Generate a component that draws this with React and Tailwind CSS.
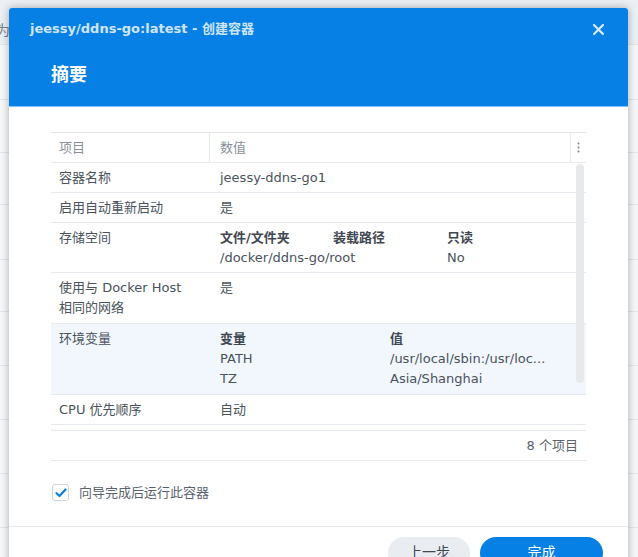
import React from "react";

const font = { fontFamily: '"DejaVu Sans", "Noto Sans CJK SC", sans-serif' };

function Row({ label, children, h, highlight }) {
  return (
    <div
      className={`flex border-b border-[#e6e9ed] ${highlight ? "bg-[#f1f7fd]" : ""}`}
      style={{ height: h }}
    >
      <div className="w-[159px] shrink-0 pl-2 pt-[5px] leading-[20px]">{label}</div>
      <div className="flex-1 pl-[10px] pt-[5px] leading-[20px] min-w-0">{children}</div>
    </div>
  );
}

export default function App() {
  const bgRows = [45, 55, 53, 52, 55, 52, 54, 54, 54, 54];
  return (
    <div
      className="relative w-[638px] h-[557px] overflow-hidden bg-[#f6f7f9] text-[13px] text-[#4a535c]"
      style={font}
    >
      {/* background page */}
      <div className="flex flex-col">
        {bgRows.map((h, i) => (
          <div
            key={i}
            className={`border-b border-[#e3e6ea] ${i === 0 ? "bg-[#eceff3]" : ""}`}
            style={{ height: h }}
          >
            {i === 0 && (
              <div className="pt-[20px] pl-0 text-[14px] text-[#7a8088] -ml-[4px]">为</div>
            )}
          </div>
        ))}
      </div>

      {/* dialog */}
      <div className="absolute left-[9px] top-[8px] w-[619px] h-[580px] bg-white shadow-[0_0_8px_rgba(0,0,0,0.3)] rounded-t-[3px] flex flex-col">
        <div className="h-[99px] bg-[#0780e6] border-b border-[#7cc4ff] rounded-t-[3px] relative">
          <div className="pt-[11px] pl-[21px] text-[13px] font-bold text-[#cfe5fb]">
            jeessy/ddns-go:latest - 创建容器
          </div>
          <div className="pt-[22px] pl-[42px] text-[18px] font-bold text-white">摘要</div>
          <svg
            className="absolute right-[24px] top-[16px]"
            width="11"
            height="11"
            viewBox="0 0 11 11"
          >
            <path d="M1 1L10 10M10 1L1 10" stroke="#d4ebff" strokeWidth="2.2" strokeLinecap="round" />
          </svg>
        </div>

        <div className="px-[42px] pt-[25px]">
          {/* table */}
          <div className="border-t border-[#e3e6ea]">
            <div className="flex h-[30px] border-b border-[#e6e9ed] text-[#8a9099] leading-[29px]">
              <div className="w-[159px] shrink-0 pl-2 border-r border-[#e6e9ed]">项目</div>
              <div className="flex-1 pl-[10px]">数值</div>
              <div className="w-[16px] border-l border-[#e6e9ed] flex items-center justify-center">
                <svg width="3" height="11" viewBox="0 0 3 11">
                  <circle cx="1.5" cy="1.5" r="1" fill="#7a8088" />
                  <circle cx="1.5" cy="5.5" r="1" fill="#7a8088" />
                  <circle cx="1.5" cy="9.5" r="1" fill="#7a8088" />
                </svg>
              </div>
            </div>
            <div className="relative h-[262px] overflow-hidden">
              <Row label="容器名称" h={30}>jeessy-ddns-go1</Row>
              <Row label="启用自动重新启动" h={30}>是</Row>
              <Row label="存储空间" h={50}>
                <div className="flex font-bold text-[#3f4750]">
                  <div className="w-[113px]">文件/文件夹</div>
                  <div className="w-[114px]">装载路径</div>
                  <div>只读</div>
                </div>
                <div className="flex">
                  <div className="w-[227px]">/docker/ddns-go/root</div>
                  <div>No</div>
                </div>
              </Row>
              <Row
                label={
                  <>
                    使用与 Docker Host
                    <br />
                    相同的网络
                  </>
                }
                h={51}
              >
                是
              </Row>
              <Row label="环境变量" h={71} highlight>
                <div className="flex">
                  <div className="w-[170px] shrink-0">
                    <div className="font-bold text-[#3f4750]">变量</div>
                    <div>PATH</div>
                    <div>TZ</div>
                  </div>
                  <div className="min-w-0 w-[166px]">
                    <div className="font-bold text-[#3f4750]">值</div>
                    <div className="truncate">/usr/local/sbin:/usr/loc...</div>
                    <div>Asia/Shanghai</div>
                  </div>
                </div>
              </Row>
              <Row label="CPU 优先顺序" h={30}>自动</Row>
              <div className="absolute right-[2px] top-[1px] w-[8px] h-[219px] rounded-full bg-[#e8e9eb]" />
            </div>
            <div className="h-[5px]" />
            <div className="h-[31px] border-y border-[#e6e9ed] flex items-center justify-end pr-2 text-[#5a636c]">
              8 个项目
            </div>
          </div>

          <div className="mt-[22px] flex items-center gap-[10px] pl-px">
            <div className="w-[17px] h-[17px] rounded-[3px] border border-[#cfd5dc] bg-white flex items-center justify-center">
              <svg width="12" height="10" viewBox="0 0 12 10">
                <path d="M1.5 5.2L4.5 8L10.5 1.5" stroke="#0a7ee4" strokeWidth="2.2" fill="none" strokeLinecap="round" strokeLinejoin="round" />
              </svg>
            </div>
            <div className="text-[#5a636c]">向导完成后运行此容器</div>
          </div>
        </div>

        <div className="mt-[23px] border-t border-[#e6e9ed] flex justify-end gap-[10px] pr-[25px] pt-[10px]">
          <div className="w-[82px] h-[32px] rounded-full bg-[#e9edf1] flex items-center justify-center text-[14px] text-[#3f4750]">
            上一步
          </div>
          <div className="w-[123px] h-[32px] rounded-full bg-[#0780e6] flex items-center justify-center text-[14px] text-white">
            完成
          </div>
        </div>
      </div>
    </div>
  );
}
